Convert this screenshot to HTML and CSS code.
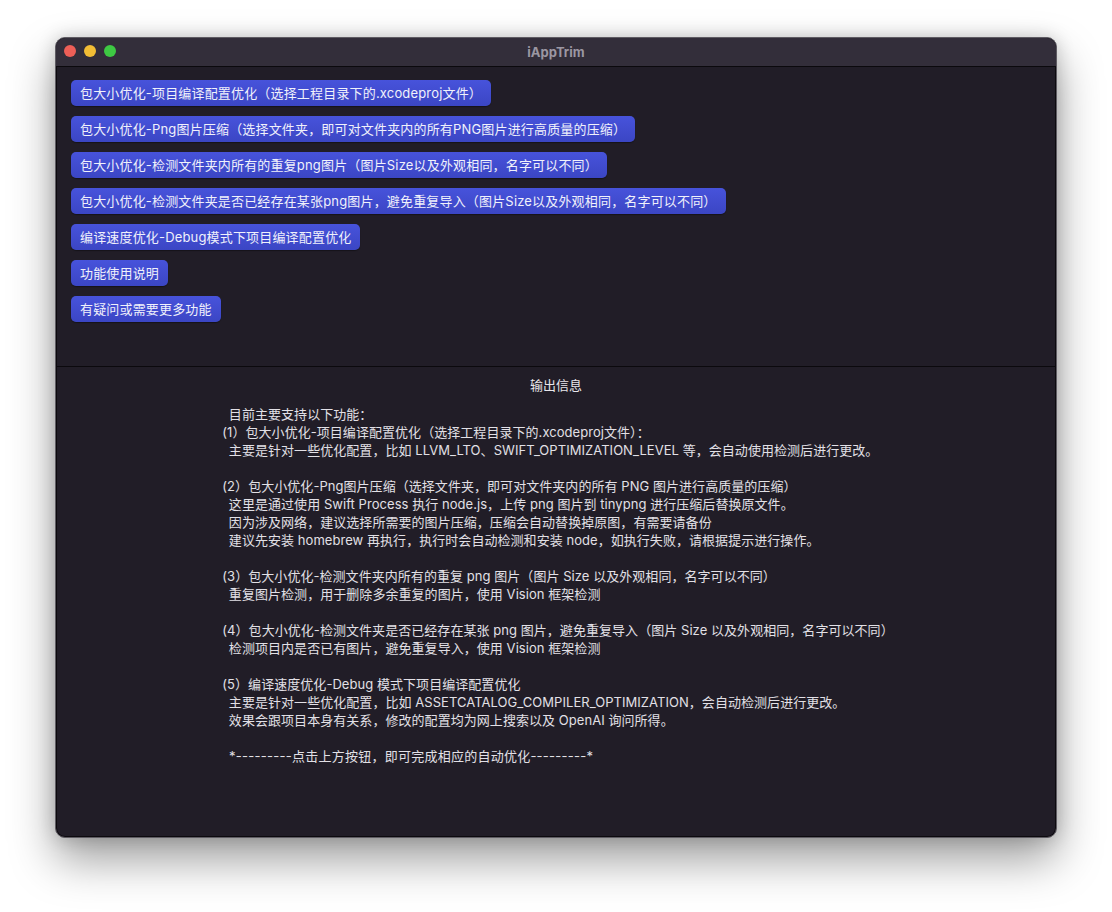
FILE: index.html
```html
<!DOCTYPE html>
<html lang="zh-CN">
<head>
<meta charset="utf-8">
<title>iAppTrim</title>
<link rel="stylesheet" href="styles.css">
</head>
<body>
<div class="stage">
  <div class="window">
    <div class="titlebar">
      <div class="lights">
        <span class="light red"></span>
        <span class="light yellow"></span>
        <span class="light green"></span>
      </div>
      <div class="title">iAppTrim</div>
    </div>
    <div class="top-panel">
      <button class="btn">包大小优化-项目编译配置优化（选择工程目录下的.xcodeproj文件）</button>
      <button class="btn">包大小优化-Png图片压缩（选择文件夹，即可对文件夹内的所有PNG图片进行高质量的压缩）</button>
      <button class="btn">包大小优化-检测文件夹内所有的重复png图片（图片Size以及外观相同，名字可以不同）</button>
      <button class="btn">包大小优化-检测文件夹是否已经存在某张png图片，避免重复导入（图片Size以及外观相同，名字可以不同）</button>
      <button class="btn">编译速度优化-Debug模式下项目编译配置优化</button>
      <button class="btn">功能使用说明</button>
      <button class="btn">有疑问或需要更多功能</button>
    </div>
    <div class="bottom-panel">
      <div class="out-title">输出信息</div>
      <div class="out-text">&#8194;目前主要支持以下功能：
(1）包大小优化-项目编译配置优化（选择工程目录下的.xcodeproj文件）：
&#8194;主要是针对一些优化配置，比如 LLVM_LTO、SWIFT_OPTIMIZATION_LEVEL 等，会自动使用检测后进行更改。

(2）包大小优化-Png图片压缩（选择文件夹，即可对文件夹内的所有 PNG 图片进行高质量的压缩）
&#8194;这里是通过使用 Swift Process 执行 node.js，上传 png 图片到 tinypng 进行压缩后替换原文件。
&#8194;因为涉及网络，建议选择所需要的图片压缩，压缩会自动替换掉原图，有需要请备份
&#8194;建议先安装 homebrew 再执行，执行时会自动检测和安装 node，如执行失败，请根据提示进行操作。

(3）包大小优化-检测文件夹内所有的重复 png 图片（图片 Size 以及外观相同，名字可以不同）
&#8194;重复图片检测，用于删除多余重复的图片，使用 Vision 框架检测

(4）包大小优化-检测文件夹是否已经存在某张 png 图片，避免重复导入（图片 Size 以及外观相同，名字可以不同）
&#8194;检测项目内是否已有图片，避免重复导入，使用 Vision 框架检测

(5）编译速度优化-Debug 模式下项目编译配置优化
&#8194;主要是针对一些优化配置，比如 ASSETCATALOG_COMPILER_OPTIMIZATION，会自动检测后进行更改。
&#8194;效果会跟项目本身有关系，修改的配置均为网上搜索以及 OpenAI 询问所得。

<span class="last-line">&#8194;*---------点击上方按钮，即可完成相应的自动优化---------*</span></div>
    </div>
  </div>
</div>
</body>
</html>
```

FILE: styles.css
```css
* { box-sizing: border-box; }
html, body {
  margin: 0;
  padding: 0;
  background: #ffffff;
  width: 1112px;
  height: 912px;
  overflow: hidden;
  font-family: "Inter", "Noto Sans CJK SC", "Noto Sans", sans-serif;
}
.stage {
  padding: 37px 0 0 55px;
}
.window {
  width: 1002px;
  height: 801px;
  border-radius: 10px;
  border: 1px solid #5f5c63;
  background: #211d27;
  box-shadow: 0 22px 45px rgba(0,0,0,0.38), 0 0 18px rgba(0,0,0,0.18), inset 0 0 0 1px #0c0a0e;
  display: flex;
  flex-direction: column;
  overflow: hidden;
}
.titlebar {
  height: 29px;
  flex: 0 0 29px;
  background: #332e3a;
  border-bottom: 1px solid #0b090d;
  position: relative;
  display: flex;
  align-items: center;
  justify-content: center;
}
.lights {
  position: absolute;
  left: 8px;
  top: 7px;
  display: flex;
  gap: 8px;
}
.light {
  width: 12px;
  height: 12px;
  border-radius: 50%;
  display: block;
}
.red { background: #ed5f57; }
.yellow { background: #f2bd35; }
.green { background: #3ec943; }
.title {
  color: #9b97a2;
  font-family: "Inter", "Liberation Sans", sans-serif;
  font-weight: 700;
  font-size: 13px;
  margin-top: -1px;
}
.top-panel {
  height: 300px;
  flex: 0 0 300px;
  padding: 13px 15px 0;
  display: flex;
  flex-direction: column;
  align-items: flex-start;
  gap: 10px;
  border-bottom: 1px solid #0b090d;
}
.btn {
  height: 26px;
  padding: 0 9px;
  border: none;
  border-radius: 5px;
  background: linear-gradient(#4753db, #3b46c4);
  color: #f0f1fb;
  font-family: "Inter", "Noto Sans CJK SC", "Noto Sans", sans-serif;
  font-size: 13px;
  line-height: 26px;
  letter-spacing: 0.17px;
  white-space: nowrap;
  box-shadow: 0 1px 1px rgba(0,0,0,0.35);
}
.bottom-panel {
  flex: 1;
  display: flex;
  flex-direction: column;
  align-items: center;
  padding-top: 8px;
}
.out-title {
  color: #e8e6eb;
  font-size: 13px;
  line-height: 20px;
  margin-bottom: 10px;
}
.out-text {
  white-space: pre;
  color: #e2e0e6;
  font-size: 13px;
  line-height: 18px;
  letter-spacing: 0.05px;
  margin-left: 4px;
}
.last-line {
  letter-spacing: 0.25px;
}
```
